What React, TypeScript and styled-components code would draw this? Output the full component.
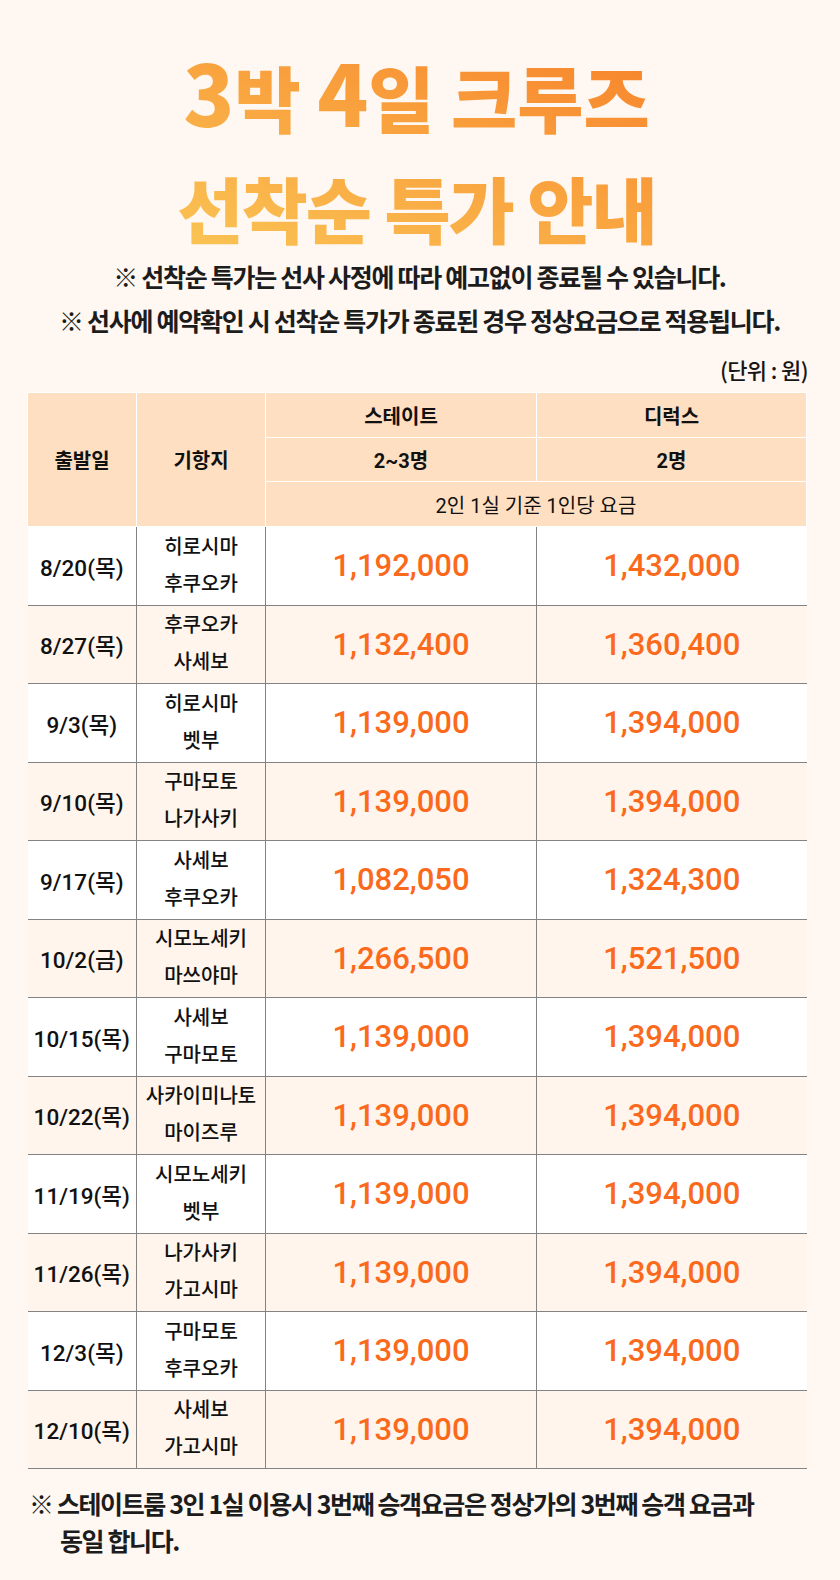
import styled, { createGlobalStyle } from 'styled-components';

type Sailing = {
  date: string;
  ports: [string, string];
  state: string;
  deluxe: string;
};

const sailings: Sailing[] = [
  { date: '8/20(목)', ports: ['히로시마', '후쿠오카'], state: '1,192,000', deluxe: '1,432,000' },
  { date: '8/27(목)', ports: ['후쿠오카', '사세보'], state: '1,132,400', deluxe: '1,360,400' },
  { date: '9/3(목)', ports: ['히로시마', '벳부'], state: '1,139,000', deluxe: '1,394,000' },
  { date: '9/10(목)', ports: ['구마모토', '나가사키'], state: '1,139,000', deluxe: '1,394,000' },
  { date: '9/17(목)', ports: ['사세보', '후쿠오카'], state: '1,082,050', deluxe: '1,324,300' },
  { date: '10/2(금)', ports: ['시모노세키', '마쓰야마'], state: '1,266,500', deluxe: '1,521,500' },
  { date: '10/15(목)', ports: ['사세보', '구마모토'], state: '1,139,000', deluxe: '1,394,000' },
  { date: '10/22(목)', ports: ['사카이미나토', '마이즈루'], state: '1,139,000', deluxe: '1,394,000' },
  { date: '11/19(목)', ports: ['시모노세키', '벳부'], state: '1,139,000', deluxe: '1,394,000' },
  { date: '11/26(목)', ports: ['나가사키', '가고시마'], state: '1,139,000', deluxe: '1,394,000' },
  { date: '12/3(목)', ports: ['구마모토', '후쿠오카'], state: '1,139,000', deluxe: '1,394,000' },
  { date: '12/10(목)', ports: ['사세보', '가고시마'], state: '1,139,000', deluxe: '1,394,000' },
];

const CruisePrices = () => {
  return (
    <>
      <GlobalStyle />
      <Page>
        <Title>
          <TitleLine $spacing={0}>
            <Num>3</Num>박 <Num>4</Num>일 크루즈
          </TitleLine>
          <TitleLine $spacing={-2}>선착순 특가 안내</TitleLine>
        </Title>
        <Notes>
          <p>※ 선착순 특가는 선사 사정에 따라 예고없이 종료될 수 있습니다.</p>
          <p>※ 선사에 예약확인 시 선착순 특가가 종료된 경우 정상요금으로 적용됩니다.</p>
        </Notes>
        <Unit>(단위 : 원)</Unit>
        <Table>
          <colgroup>
            <col style={{ width: 109 }} />
            <col style={{ width: 129 }} />
            <col style={{ width: 271 }} />
            <col style={{ width: 270 }} />
          </colgroup>
          <thead>
            <tr>
              <Th rowSpan={3}>출발일</Th>
              <Th rowSpan={3}>기항지</Th>
              <Th $h={45}>스테이트</Th>
              <Th $h={45}>디럭스</Th>
            </tr>
            <tr>
              <Th $h={44}>2~3명</Th>
              <Th $h={44}>2명</Th>
            </tr>
            <tr>
              <Th $h={45} colSpan={2} $light>
                2인 1실 기준 1인당 요금
              </Th>
            </tr>
          </thead>
          <tbody>
            {sailings.map((s, i) => (
              <Row key={s.date} $alt={i % 2 === 1}>
                <DateCell>{s.date}</DateCell>
                <PortCell>
                  {s.ports[0]}
                  <br />
                  {s.ports[1]}
                </PortCell>
                <PriceCell>{s.state}</PriceCell>
                <PriceCell>{s.deluxe}</PriceCell>
              </Row>
            ))}
          </tbody>
        </Table>
        <Footnote>
          ※ 스테이트룸 3인 1실 이용시 3번째 승객요금은 정상가의 3번째 승객 요금과
          <br />
          동일 합니다.
        </Footnote>
      </Page>
    </>
  );
};

const GlobalStyle = createGlobalStyle`
  html, body {
    margin: 0;
    padding: 0;
    background: #fff7f1;
  }
  body {
    font-family: Roboto, "Noto Sans CJK KR", sans-serif;
    color: #161616;
  }
`;

const Page = styled.div`
  width: 840px;
  box-sizing: border-box;
  padding: 40px 34px 40px 27px;
  display: flex;
  flex-direction: column;
`;

const Title = styled.h1`
  margin: 0 auto;
  width: fit-content;
  font-family: "Noto Sans CJK KR", sans-serif;
  font-weight: 900;
  font-size: 72px;
  line-height: 111px;
  text-align: center;
  background: linear-gradient(20deg, #fac656 0%, #f9a540 50%, #f7812a 100%);
  -webkit-background-clip: text;
  background-clip: text;
  color: transparent;
`;

const TitleLine = styled.div<{ $spacing: number }>`
  letter-spacing: ${(p) => p.$spacing}px;
  white-space: nowrap;
`;

const Num = styled.span`
  font-size: 84px;
  line-height: 1;
`;

const Notes = styled.div`
  margin-top: -8px;
  padding-left: 6px;
  text-align: center;
  font-family: "Noto Sans CJK KR", sans-serif;
  font-weight: 700;
  font-size: 25px;
  line-height: 44px;
  letter-spacing: -1.3px;
  color: #1c1c1c;

  & p {
    margin: 0;
    white-space: nowrap;
  }
`;

const Unit = styled.div`
  margin: 12px -2px 0 0;
  text-align: right;
  font-family: "Noto Sans CJK KR", sans-serif;
  font-weight: 500;
  font-size: 22px;
  line-height: 30px;
  letter-spacing: -0.6px;
`;

const Table = styled.table`
  margin-top: 8px;
  width: 779px;
  table-layout: fixed;
  border-collapse: collapse;
  border: none;
`;

const Th = styled.th<{ $light?: boolean; $h?: number }>`
  height: ${(p) => (p.$h ? `${p.$h}px` : 'auto')};
  box-sizing: border-box;
  padding: 0;
  background: #ffdfc1;
  border: 1px solid #ffffff;
  font-weight: ${(p) => (p.$light ? 400 : 700)};
  font-size: 20px;
  color: #111;
  text-align: center;
  vertical-align: middle;
`;

const Row = styled.tr<{ $alt: boolean }>`
  background: ${(p) => (p.$alt ? '#fff5ec' : '#ffffff')};

  & td {
    height: 78.5px;
    box-sizing: border-box;
    padding: 0;
    text-align: center;
    vertical-align: middle;
    border-bottom: 1px solid #838383;
    border-left: 1px solid #838383;
  }
  & td:first-child {
    border-left: none;
  }
`;

const DateCell = styled.td`
  font-weight: 500;
  font-size: 22.5px;
  color: #111;
  white-space: nowrap;
`;

const PortCell = styled.td`
  font-weight: 500;
  font-size: 20px;
  line-height: 37px;
  color: #111;
  white-space: nowrap;
`;

const PriceCell = styled.td`
  font-weight: 500;
  font-size: 31px;
  color: #fb6a1c;
`;

const Footnote = styled.p`
  margin: 16px 0 0;
  padding-left: 33px;
  text-indent: -31px;
  font-family: "Noto Sans CJK KR", sans-serif;
  font-weight: 700;
  font-size: 25px;
  line-height: 37px;
  letter-spacing: -1.4px;
  color: #1c1c1c;
`;

export default CruisePrices;
